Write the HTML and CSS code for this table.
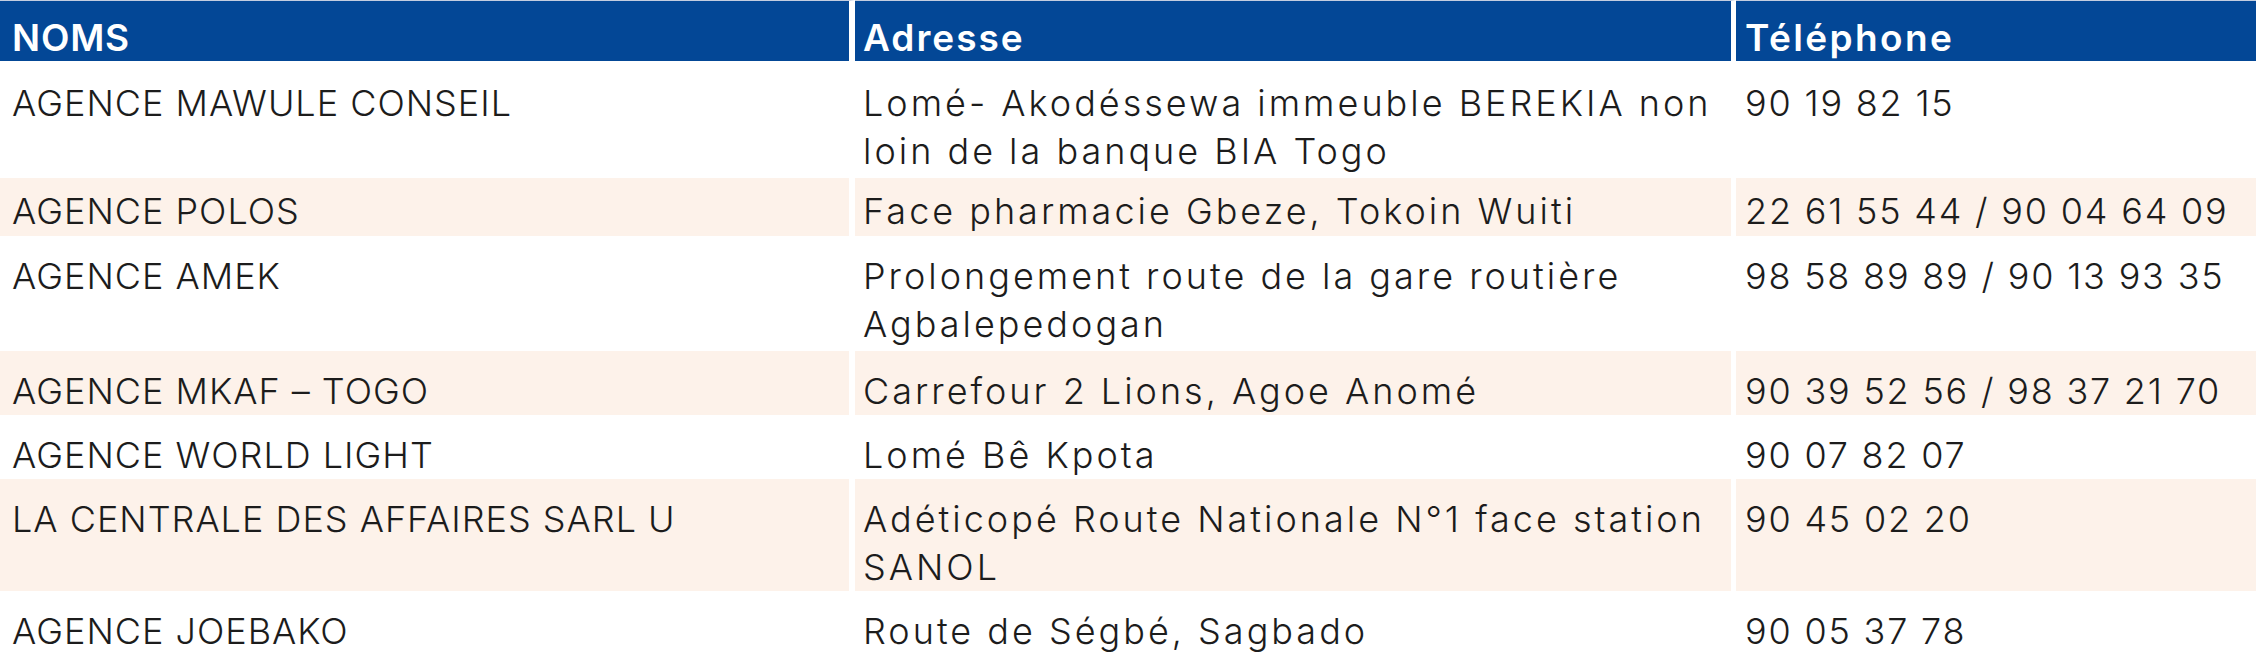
FILE: index.html
```html
<!DOCTYPE html>
<html lang="fr">
<head>
<meta charset="utf-8">
<title>Agences</title>
<link rel="stylesheet" href="styles.css">
</head>
<body>
<table class="agences">
  <colgroup>
    <col class="c-nom">
    <col class="c-adr">
    <col class="c-tel">
  </colgroup>
  <thead>
    <tr class="head">
      <th class="nom">NOMS</th>
      <th class="adr">Adresse</th>
      <th class="tel">Téléphone</th>
    </tr>
  </thead>
  <tbody>
    <tr class="r-117">
      <td class="nom">AGENCE MAWULE CONSEIL</td>
      <td class="adr">Lomé- Akodéssewa immeuble BEREKIA non loin de la banque BIA Togo</td>
      <td class="tel">90 19 82 15</td>
    </tr>
    <tr class="r-58 alt">
      <td class="nom">AGENCE POLOS</td>
      <td class="adr">Face pharmacie Gbeze, Tokoin Wuiti</td>
      <td class="tel">22 61 55 44 / 90 04 64 09</td>
    </tr>
    <tr class="r-115">
      <td class="nom">AGENCE AMEK</td>
      <td class="adr">Prolongement route de la gare routière Agbalepedogan</td>
      <td class="tel">98 58 89 89 / 90 13 93 35</td>
    </tr>
    <tr class="r-64 alt">
      <td class="nom">AGENCE MKAF – TOGO</td>
      <td class="adr">Carrefour 2 Lions, Agoe Anomé</td>
      <td class="tel">90 39 52 56 / 98 37 21 70</td>
    </tr>
    <tr class="r-64">
      <td class="nom">AGENCE WORLD LIGHT</td>
      <td class="adr">Lomé Bê Kpota</td>
      <td class="tel">90 07 82 07</td>
    </tr>
    <tr class="r-112 alt">
      <td class="nom">LA CENTRALE DES AFFAIRES SARL U</td>
      <td class="adr">Adéticopé Route Nationale N°1 face station SANOL</td>
      <td class="tel">90 45 02 20</td>
    </tr>
    <tr class="r-64">
      <td class="nom">AGENCE JOEBAKO</td>
      <td class="adr">Route de Ségbé, Sagbado</td>
      <td class="tel">90 05 37 78</td>
    </tr>
  </tbody>
</table>
</body>
</html>
```
FILE: styles.css
```css
html, body {
  margin: 0;
  padding: 0;
  background: #ffffff;
}

.agences {
  width: 2256px;
  table-layout: fixed;
  border-collapse: separate;
  border-spacing: 0;
  font-family: "Inter", "Noto Sans", sans-serif;
  color: #1c1c1c;
}

.c-nom { width: 855px; }
.c-adr { width: 881px; }
.c-tel { width: 520px; }

.agences th,
.agences td {
  padding: 0;
  text-align: left;
  background-clip: padding-box;
}

.agences .nom { border-right: 6px solid #ffffff; padding-left: 12px; }
.agences .adr { border-right: 5px solid #ffffff; padding-left: 8px; padding-right: 2px; }
.agences .tel { padding-left: 9px; }

.head th {
  height: 61px;
  border-top: 1px solid #c3cde0;
  background-color: #034796;
  color: #ffffff;
  font-size: 37px;
  font-weight: 600;
  line-height: 40px;
  vertical-align: bottom;
  padding-bottom: 3px;
  box-sizing: border-box;
  letter-spacing: 2px;
}

.head th.nom { letter-spacing: 0.8px; }
.head th.tel { letter-spacing: 2.4px; }

.agences td {
  font-size: 36px;
  font-weight: 300;
  line-height: 48px;
  vertical-align: top;
  padding-top: 16px;
  box-sizing: border-box;
  background-color: #ffffff;
}

.agences td.nom { letter-spacing: 1px; }
.agences td.adr { letter-spacing: 3px; }
.agences td.tel { letter-spacing: 1.8px; }

.agences tr.alt td { background-color: #fdf2ea; }

.r-117 td { height: 117px; padding-top: 18px; }
.r-115 td { height: 115px; }
.r-112 td { height: 112px; }
.r-64 td { height: 64px; }
.r-58 td { height: 58px; padding-top: 9px; }
```
